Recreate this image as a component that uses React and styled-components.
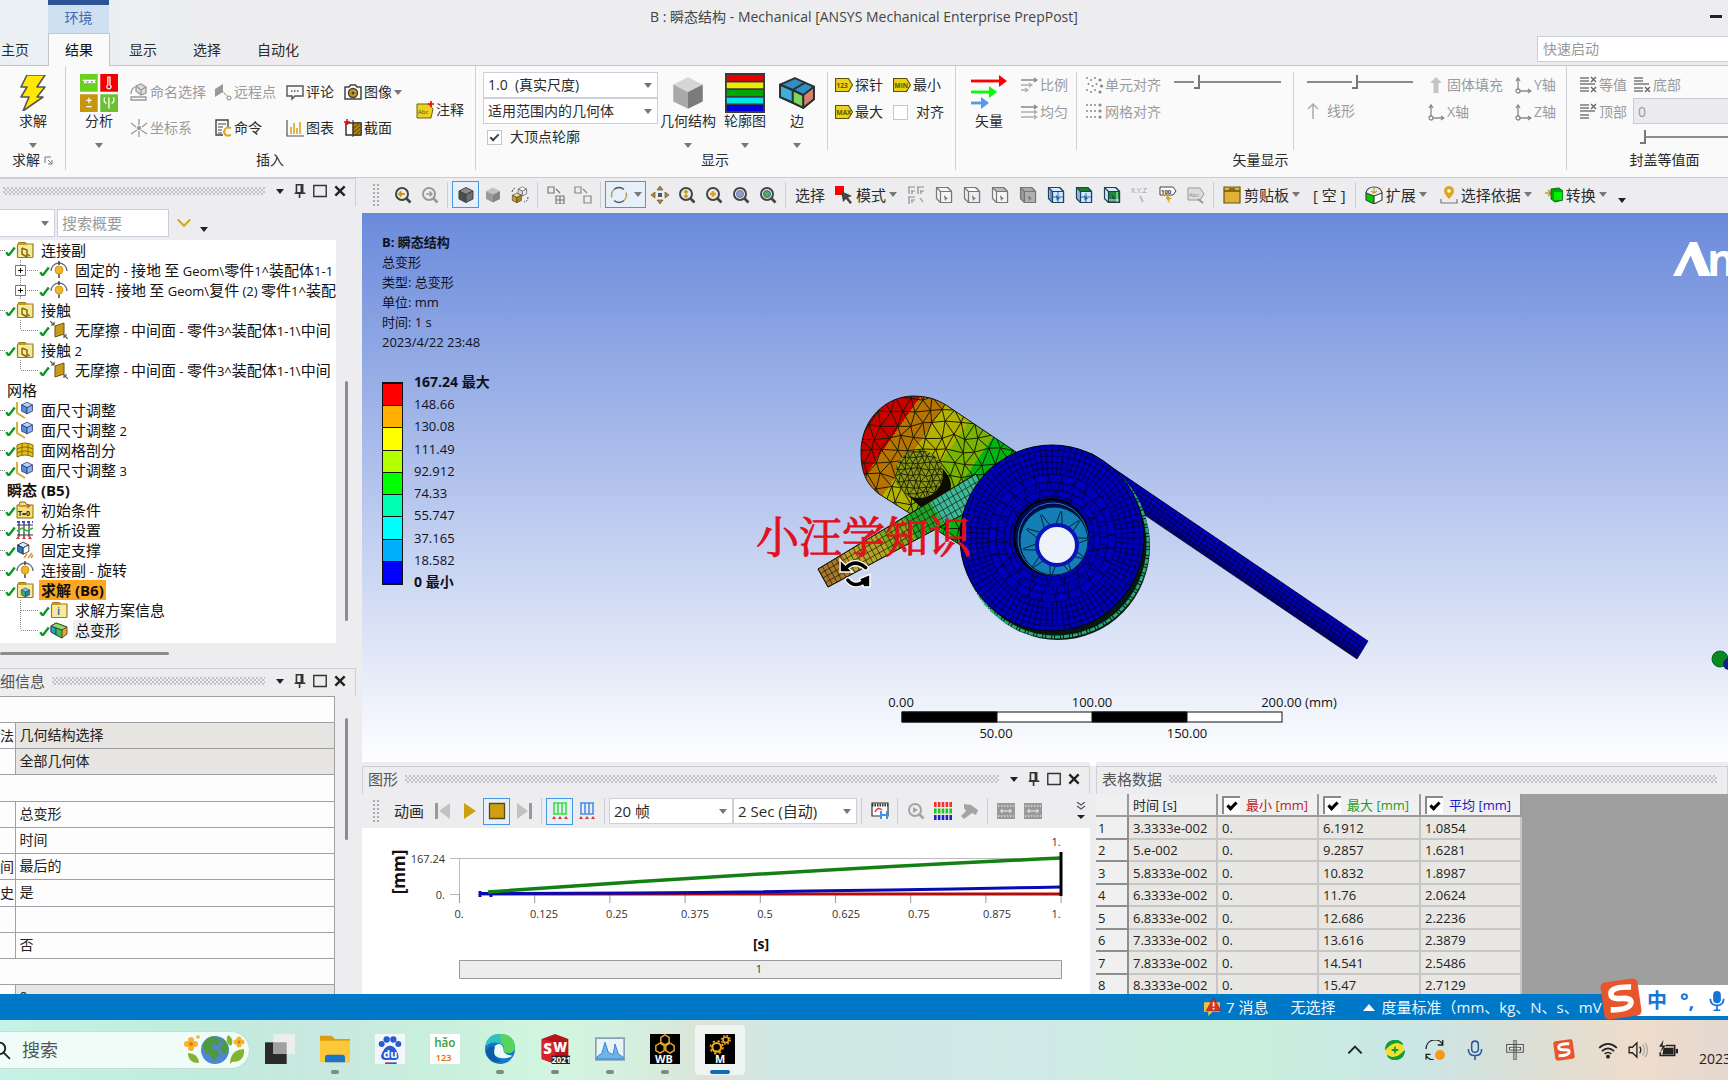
import React from "react";
import styled, { createGlobalStyle, css } from "styled-components";

const ui = `"Open Sans", "Noto Sans CJK SC", sans-serif`;

const Global = createGlobalStyle`
  *, *::before, *::after { box-sizing: border-box; }
  html, body, #root { height: 100%; margin: 0; }
  body { font: 14px/20px ${ui}; color: #2b2b2b; background: #ededef; overflow: hidden; }
  button, input, select { font: inherit; color: inherit; margin: 0; padding: 0; border: 0; background: none; border-radius: 0; outline: 0; }
  button { white-space: nowrap; cursor: pointer; }
  svg { display: block; flex: none; }
`;

/* ---------- icons ---------- */
const K = "#444";
const Y = "#c99a1c";
const cube = (a, b, c, s = K) => (
  <g stroke={s} strokeWidth="1" strokeLinejoin="round">
    <path d="M9 1.5 16 5 9 8.5 2 5Z" fill={a} />
    <path d="M2 5v8l7 3.500v-8Z" fill={b} />
    <path d="M16 5v8l-7 3.500v-8Z" fill={c} />
  </g>
);
const lens = (s, inner) => (
  <g fill="none" stroke={s} strokeWidth="2">
    <circle cx="8" cy="8" r="6" />
    <path d="m12.500 12.500 4 4" strokeWidth="2.600" />
    {inner}
  </g>
);
const box3 = (top, front, side, s = "#777") => (
  <g stroke={s} strokeWidth="1.200" strokeLinejoin="round">
    <path d="M1.500 1.500h11l4 4v11h-11l-4-4Z" fill={side} />
    <path d="M1.500 1.500h11l4 4h-11Z" fill={top} />
    <path d="M5.500 5.500h11v11h-11Z" fill={front} />
    <path d="m9 9 4 4-2 .300-1 2Z" fill={s} stroke="none" />
  </g>
);
const tag = (t) => (
  <g>
    <path d="M.500 2.500h13l4 6.500-4 6.500H.500Z" fill="#ecd21a" stroke="#5a5200" strokeWidth="1.200" />
    <text x="1.500" y="11.500" fontSize="6.500" fontWeight="700" fill="#5a5200">{t}</text>
  </g>
);
const arrows = (ends) => ends.map((e, i) => (
  <path key={i} d={`M1 ${4 + i * 5}h${e}m-3-2 3 2-3 2`} stroke={i ? "#b0b0b0" : "#888"} strokeWidth="1.300" fill="none" />
));
const axis = (
  <g stroke="#8a8a8a" strokeWidth="1.300" fill="none">
    <path d="M4 13V2M2 5l2-3 2 3M6 15h11M14 13l3 2-3 2" /><circle cx="4" cy="15" r="2" />
  </g>
);
const dotGrid = (skew) => (
  <g fill="#8a8a8a">
    {[2, 6, 10, 15].flatMap((x, i) => [2, 8, 14].map((y, j) => (
      <circle key={x + "-" + y} cx={x + (skew && j === 1 ? 1.5 : 0)} cy={y + (skew && i % 2 ? 2 : 0)} r={i === 3 ? 1.6 : 1} />
    )))}
  </g>
);
const iso = (top, bottom) => (
  <g>
    <path d="M1 2h9M1 5h9M1 8h15M1 12h9M1 15h9" stroke="#999" strokeWidth="2.200" />
    {top && <path d="m12 1 5 5m0-5-5 5" stroke="#666" strokeWidth="1.400" />}
    {bottom && <path d="m12 11 5 5m0-5-5 5" stroke="#666" strokeWidth="1.400" />}
  </g>
);
const folder = (inner) => (
  <g>
    <path d="M1.500 4 3 1.500h6L10.500 3H17v12.500q0 1-1 1H2.500q-1 0-1-1Z" fill="#f6eb9a" stroke="#9a7a1a" strokeWidth="1.200" />
    <path d="M2 4 3.300 2H9l1.500 2Z" fill="#c99a1c" />
    {inner}
  </g>
);
const bars = (c) => (
  <g>
    <path d="M2 1h14M2 12h14M3 1v11M7 1v11M11 1v11M15 1v11" stroke={c} strokeWidth="1.600" />
    <path d="m1 17 2-3 2 3Zm6 0 2-3 2 3Zm6 0 2-3 2 3Z" fill="#d33" />
  </g>
);

const icons = {
  bolt: <path d="M6 0h9l-4 6h4l-4 5h3L4 18l3-7H3l3-5H3Z" fill="#ffe900" stroke="#555" strokeWidth=".8" strokeLinejoin="round" />,
  analysis: (
    <g>
      <path d="M0 0h8.400v8.400H0Z" fill="#6cd022" /><path d="M9.600 0H18v8.400H9.600Z" fill="#f20000" />
      <path d="M0 9.600h8.400V18H0Z" fill="#c8960c" /><path d="M9.600 9.600H18V18H9.600Z" fill="#6cc032" />
      <path d="M1.300 3h6M2 4.300l.6-1 .6 1M4 4.300l.6-1 .6 1M6 4.300l.6-1 .6 1M13.200 1.500h1v3.700a1 1 0 1 1-1 0ZM3 12.500h2.500M4.250 11.300v2.500M3 15.500h2.500M13.700 11v5.500M11.500 11v2l1 1M16 11v2l-1 1" fill="none" stroke="#fff" strokeWidth=".6" />
    </g>
  ),
  named: <g fill="none" stroke="#999" strokeWidth="1.300"><path d="M1 14h15v3H1Z" /><path d="m6 3 5-2 5 3v6l-5 2-5-4Z" fill="#ddd" /><path d="m6 3 5 4 5-3M11 7v5" /><path d="M1 11q0-5 4-7" /></g>,
  remote: <g><path d="m1 6 8-5v8l-8 5Z" fill="#999" /><path d="m8 8 5 5" stroke="#999" strokeWidth="1.300" strokeDasharray="2 1" /><circle cx="15" cy="15" r="2" fill="none" stroke="#888" /></g>,
  comment: <g fill="none" stroke="#555" strokeWidth="1.400"><path d="M1 3h16v10H9l-3 3v-3H1Z" /><path d="M5 8h8" strokeDasharray="1.500 1.500" /></g>,
  camera: <g><path d="M1 4h4l1.500-2h5L13 4h4v12H1Z" fill="#fff" stroke="#444" strokeWidth="1.500" /><circle cx="9" cy="10" r="4.500" fill="#c99a1c" stroke="#444" strokeWidth="1.500" /><circle cx="9" cy="10" r="1.500" fill="#444" /></g>,
  note: <g><path d="M1 3h12l4 5-2 9H1Z" fill="#ecd21a" stroke="#6b6400" /><text x="2" y="13" fontSize="6" fill="#444">Abc</text><path d="M15 0v6M12 3h6" stroke="#e00" strokeWidth="1.600" /></g>,
  coord: <g stroke="#999" strokeWidth="1.300"><path d="M9 0v6M9 12v6M1 15l6-4M17 15l-6-4M1 4l5 4M17 4l-5 4" /><circle cx="9" cy="9" r="1.500" fill="#999" /></g>,
  command: <g fill="none"><path d="M14 8V1H2v15h7" stroke="#444" strokeWidth="1.400" /><path d="M4 5h8M4 8h5M4 11h4M4 14h4" stroke="#444" /><path d="M17 9q-6-2-7 4 1 5 7 3" stroke="#dfa61a" strokeWidth="2" /></g>,
  chart: <g fill="none"><path d="M1 1v16h17" stroke="#555" strokeWidth="1.200" /><path d="M5 15V8M8 15V4M11 15V9M14 15V3" stroke="#dba520" strokeWidth="1.600" /></g>,
  section: <g><path d="M2 4h15v12H2Z" fill="#fff" stroke="#333" strokeWidth="1.500" /><path d="M9 4h8v12H9Z" fill="#b5820f" stroke="#333" /><path d="m10 9 5-4M10 13l6-5M11 16l5-4" stroke="#5b4208" /><path d="M9 1v17" stroke="#333" /><path d="M0 3h6M3 0v6" stroke="#e00" strokeWidth="1.500" /></g>,
  geo: cube("#d6d6d6", "#a9a9a9", "#7b7b7b", "none"),
  contour: <g><path d="M0 0h18v18H0Z" fill="#3a3a3a" />{["#e80000", "#ecec00", "#00a600", "#00e5e5", "#0000e0"].map((c, i) => <path key={c} d={`M.8 ${0.9 + i * 3.4}h16.400v2.600H.8Z`} fill={c} />)}</g>,
  edge: <g stroke="#2a3030" strokeWidth=".9" strokeLinejoin="round"><path d="m1 5 7-3 9 4v6l-5 4L1 11Z" fill="#2f8fc4" /><path d="m1 5 6 2.500v6L1 11Z" fill="#3faedb" /><path d="m7 7.500 5 2.500v6l-5-2.500Z" fill="#7fd65c" /><path d="m12 10 5-4v6l-5 4Z" fill="#d9806f" /><path d="m7 7.500 6-3.500M1 5l11 5" /></g>,
  probe: tag("123"), min: tag("MIN"), max: tag("MAX"),
  vector: <g fill="none" strokeWidth="1.400"><path d="M0 3h14" stroke="#f00" /><path d="m14 0 4 3-4 3Z" fill="#f00" /><path d="M0 8.500h10" stroke="#0f0" /><path d="m9 5.500 4 3-4 3Z" fill="#0f0" /><path d="M0 14h6" stroke="#5a96e8" /><path d="m5 11 4 3-4 3Z" fill="#5a96e8" /></g>,
  prop: <g>{arrows([16, 11, 7])}</g>, even: <g>{arrows([16, 16, 16])}</g>,
  dotsA: dotGrid(true), dotsB: dotGrid(false), axis,
  up: <path d="M6 17V2M1 7l5-5 5 5" fill="none" stroke="#aaa" strokeWidth="1.500" />,
  upfat: <path d="m9 1 6 6h-3.500v10h-5V7H3Z" fill="#c4c4c4" />,
  isoBoth: iso(true, true), isoTop: iso(true, false), isoBot: iso(false, true),
  pin: <path d="M5 2h7v9H5ZM3 11.500h12M8.500 12v5M10.500 2v9" fill="none" stroke="#333" strokeWidth="1.800" />,
  square: <path d="M1 2h16v14H1Z" fill="none" stroke="#333" strokeWidth="1.800" />,
  close: <path d="m3 3 12 12M15 3 3 15" stroke="#222" strokeWidth="3" />,
  zprev: lens(K, <path d="M11 8H5m2.500-2.500L5 8l2.500 2.500" stroke={Y} />),
  znext: lens("#999", <path d="M5 8h6M8.500 5.500 11 8l-2.500 2.500" strokeWidth="1.500" />),
  cubeDark: cube("#8c8c8c", "#4c4c4c", "#6e6e6e"),
  cubeSoft: cube("#c2c2c2", "#999", "#858585", "none"),
  cubeSwap: <g><g transform="translate(6 0) scale(.6)">{cube("#fff", "#ddd", "#eee")}</g><g transform="translate(0 6) scale(.65)">{cube("#f2dc7c", "#c99a1c", "#b5820f")}</g><path d="M1 6q1-4 4-4M17 11q0 4-4 5" fill="none" stroke={K} strokeDasharray="2 1" /></g>,
  expandA: <g fill="none" stroke="#777" strokeWidth="1.200"><path d="M1 1h6v6H1ZM9 10h8v8H9ZM13 10v8M9 14h8M9 3l4 4" /></g>,
  expandB: <g fill="none" stroke="#888" strokeWidth="1.200"><path d="M1 1h6v6H1ZM10 10h7v7h-7ZM9 3l4 4" /></g>,
  rotate: <g fill="none" strokeWidth="1.500"><path d="M4 3.500a7.500 7.500 0 0 1 10 0M4 14.500a7.500 7.500 0 0 0 10 0" stroke="#555" /><path d="M4 3.500a7.500 7.500 0 0 0-2 8M14 14.500a7.500 7.500 0 0 0 2-8" stroke="#b9a45a" /></g>,
  pan: <g fill="#c08a10"><path d="m9 0 3 4H6Zm0 18 3-4H6ZM0 9l4-3v6Zm18 0-4-3v6Z" stroke="#444" strokeWidth=".6" /><path d="M7 7h4v4H7Z" fill="#555" /></g>,
  zud: lens(K, <path d="M8 4.500v7M6 6.500l2-2 2 2M6 9.500l2 2 2-2" stroke={Y} strokeWidth="1.500" />),
  zin: lens(K, <path d="M8 5v6M5 8h6" stroke="#dba520" strokeWidth="2.500" />),
  zfit: lens(K, <circle cx="8" cy="8" r="3.500" fill="#8aa0c8" stroke="#6a7da8" strokeWidth="1" />),
  zsel: lens(K, <circle cx="8" cy="8" r="3.500" fill="#4fb04f" stroke="#3366aa" strokeWidth="1" />),
  mode: <g><path d="M0 0h9v9H0Z" fill="#f00" /><path d="m6 5 11 5-4 1.500 4 5-2 1.500-4-5-3 3Z" fill="#444" /></g>,
  label: <path d="M1 1h7M2 1v7M4 5h4M5 5v3M10 1h7M11 1v7M13 5h4M14 5v3M1 11h7M2 11v7M4 14h4M5 14v3M13 12l3 4" fill="none" stroke="#8d8d8d" strokeWidth="1.200" />,
  b1: box3("#f5f5f7", "#f5f5f7", "#f5f5f7"), b2: box3("#fafafa", "#ededef", "#ededef"), b3: box3("#bbb", "#f4f4f6", "#f4f4f6"), b4: box3("#aaa", "#b0b0b0", "#999"),
  b5: <g>{box3("#d8eaff", "#cfe6ff", "#9cb8d8", "#20405c")}<path d="M6 11h10M11 6v10M4 4v10" stroke="#2b6fb4" /></g>,
  b6: <g>{box3("#1a7f2a", "#cfe6ff", "#9cb8d8", "#20405c")}<path d="M6 11h10M11 7v9" stroke="#2b6fb4" /></g>,
  b7: <g>{box3("#d8eaff", "#1f8a2f", "#cfe6ff", "#204050")}<path d="M6 14h10M14 6v10" stroke="#cfe6ff" /></g>,
  xyz: <g><text x="0" y="7" fontSize="7" fill="#999">X.Y.Z</text><path d="m9 10 3 6" stroke="#bbb" strokeWidth="2" /></g>,
  n100: <g><path d="M1 1h13l3 4-3 4H1Z" fill="#fff" stroke="#444" /><text x="2" y="8" fontSize="6" fontWeight="700" fill="#333">100</text><path d="m8 9 5 4-3 .500 1 4-4-5Z" fill="#dba520" /></g>,
  abc: <g><path d="M1 2h12l4 6-4 6H1Z" fill="#ddd" stroke="#999" /><text x="2" y="11" fontSize="6" fill="#888">Abc</text><path d="m11 13 5 4" stroke="#999" strokeWidth="2" /></g>,
  clip: <g><path d="M1 1h16v16H1Z" fill="#e0b23a" stroke="#6b5312" strokeWidth="1.200" /><path d="M1 5h16M6 3h6" stroke="#6b5312" strokeWidth="1.500" /></g>,
  extend: <g fill="none" stroke="#444" strokeWidth="1.200"><path d="m1 7 8 3v8l-8-4Z" fill="#0c0" /><path d="m9 10 8-3v7l-8 4Z" fill="#fff" /><path d="M1 7q1-6 8-6t8 6" /><path d="M9 2v5M6 5l3 2 3-2" stroke="#c99a1c" /></g>,
  map: <g><path d="M9 13Q4 8 4 5a5 5 0 0 1 10 0q0 3-5 8Z" fill="#dba520" /><circle cx="9" cy="5" r="1.800" fill="#fff" /><path d="M1 13v4h16v-4" fill="none" stroke="#777" strokeWidth="1.200" /></g>,
  convert: <g><path d="M0 7h5M3 4l3 3-3 3" fill="none" stroke="#c99a1c" strokeWidth="1.500" /><path d="m6 3 8-1 4 3v9l-8 2-4-3Z" fill="#0a0" stroke="#163" /><path d="M9 6h8v8H9Z" fill="#0e0" /></g>,
  chevY: <path d="m2 5 7 7 7-7" fill="none" stroke="#dba520" strokeWidth="2.500" />,
  check: <path d="m2 12 4 5L16 4" fill="none" stroke="#0b9a24" strokeWidth="4" />,
  fJoint: folder(<path d="m6 7 5 2v7M6 7v6l5 3M11 13l3 2" fill="none" stroke="#8b6914" strokeWidth="1.500" />),
  fSol: folder(<g transform="translate(4 6) scale(.6)">{cube("#6bc3ef", "#3fae5c", "#2a7fc0", "#345")}</g>),
  fInfo: folder(<text x="7" y="14" fontSize="10" fontWeight="700" fill="#3b6fd0">i</text>),
  joint: (
    <g fill="none" stroke="#667">
      <path d="M1 10a8 8 0 0 1 16 0" strokeWidth="1.300" />
      <path d="M9 0v4M9 12v5" stroke="#444" strokeWidth="1.500" />
      <circle cx="9" cy="9" r="4" fill="#edb72a" stroke="#d29a10" />
    </g>
  ),
  contact: <g><path d="m5 5 9-3v11l-9 3Z" fill="#c99a1c" stroke="#6b5312" /><path d="m0 0 4 4M4 1v3H1M18 18l-4-4M14 17v-3h3" stroke="#555" strokeWidth="1.200" fill="none" /></g>,
  sizing: <g><path d="M1 1v11l8 5" fill="none" stroke="#d5a92b" strokeWidth="1.800" /><g transform="translate(4 0) scale(.78)">{cube("#b7d2ff", "#5d8de0", "#86b0f5", "#2a3d66")}</g></g>,
  mesh: <g><path d="M1 4q8-4 16 0v12q-8-4-16 0Z" fill="#e4c11c" stroke="#8a6d00" /><path d="M1 8q8-4 16 0M1 12q8-4 16 0M6 3v11M12 3v11" fill="none" stroke="#8a6d00" /></g>,
  t0: <g><path d="M1 4h2l1-3h5l2 3h6v13H1Z" fill="#f0e27a" stroke="#8a6d00" /><path d="M3 5h11m-3-2 3 2-3 2" stroke="#c33" fill="none" /><text x="2" y="15" fontSize="7" fontWeight="700" fill="#222">T=0</text></g>,
  settings: <g><path d="M3 1v15M8 1v15M13 1v15M1 4h16M1 14h16" stroke="#334" strokeWidth="1.200" /><path d="m1 10 5-3 5 3 6-3" fill="none" stroke="#2b2" strokeWidth="1.500" /><path d="M1 1h16" stroke="#44d" strokeWidth="2" strokeDasharray="3 2" /><path d="m0 18 2-3 2 3Zm6 0 2-3 2 3Zm6 0 2-3 2 3Z" fill="#d33" /></g>,
  support: <g><g transform="scale(.8)">{cube("#d9ecff", "#1f7fd0", "#fff", "#223")}</g><path d="m8 17 3-4M12 17l4-5M15 17l2-3" stroke="#e0902a" strokeWidth="1.400" /></g>,
  deform: <g stroke="#2a3a2a" strokeWidth=".8"><path d="m1 5 5-3 11 4v7l-5 4-11-6Z" fill="#f0a030" /><path d="m1 5 5 2v7l-5-3Z" fill="#2a9fd8" /><path d="m6 7 6 2v8l-6-3Z" fill="#35c060" /><path d="m1 5 5-3 11 4-5 3Z" fill="#8fd86a" /></g>,
  first: <g fill="#c2c2c2"><path d="M1 1h3v16H1Z" fill="#999" /><path d="M16 1v16L5 9Z" /></g>,
  play: <path d="m3 1 12 8L3 17Z" fill="#cf9f12" />,
  stop: <path d="M1.500 1.500h15v15h-15Z" fill="#cf9f12" stroke="#5a4a1a" strokeWidth="1.300" />,
  next: <g fill="#c2c2c2"><path d="M14 1h3v16h-3Z" fill="#999" /><path d="M2 1v16l11-8Z" /></g>,
  barsG: bars("#3be03b"), barsB: bars("#4a8ee8"),
  export: <g><path d="M1 1h16v13H1Z" fill="#fff" stroke="#333" strokeWidth="1.200" /><path d="M1 3h16" stroke="#333" strokeWidth="3" strokeDasharray="1.500 1" /><path d="M4 10q3-6 7-2" fill="none" stroke="#e33" strokeWidth="1.500" /><path d="M9 9h8v8H9Z" fill="#4a90e8" /><path d="M11 9h4v3h-4ZM11 14h4v3h-4Z" fill="#fff" /></g>,
  zplay: lens("#a4a4a4", <path d="M6 5v6l5-3Z" fill="#a4a4a4" stroke="none" />),
  stripes: <g strokeWidth="5" strokeDasharray="2.600 1.250"><path d="M0 2.500h18" stroke="#e33" /><path d="M0 9h18" stroke="#1ec81e" /><path d="M0 15.500h18" stroke="#22c" /></g>,
  hand: <path d="m3 2 7 1 7 5-2 5-4-2-8 6-3-3 5-5-2-3Z" fill="#a4a4a4" />,
  film: <g><path d="M0 1h18v16H0Z" fill="#999" /><path d="M1 4h16M1 14h16" stroke="#ddd" strokeWidth="1.500" strokeDasharray="1.500 1.500" /><path d="M3 9h12M5 7v4M13 7v4" stroke="#eee" /></g>,
  more: <g fill="none" stroke="#555" strokeWidth="1.200"><path d="m5 0 4 3 4-3M5 4l4 3 4-3" /><path d="m5 13 4 4 4-4Z" fill="#222" stroke="none" /></g>,
  cursor: (
    <g fill="none" strokeLinecap="round">
      <path d="M4 6q5-5 11 0M5 13q4 5 10 0" stroke="#fff" strokeWidth="3.400" />
      <path d="M.600 1.400v7h7ZM17.400 16.800v-7l-6 2.500 2.500 4.500Z" fill="#000" stroke="#fff" strokeWidth=".8" />
      <path d="M4 6q5-5 11 0M5 13q4 5 10 0" stroke="#000" strokeWidth="2" />
    </g>
  ),
  /* status and tray */
  warn: <g><path d="M1 4h15v9H9l-4 4v-4H1Z" fill="#f5c33b" /><path d="m10 0 7 12H3Z" fill="#e03020" stroke="#8e1a10" strokeWidth=".6" /><path d="M10 4v4M10 9.500v1.500" stroke="#fff" strokeWidth="1.600" /></g>,
  mag: <g fill="none" stroke="#222" strokeWidth="1.800"><circle cx="7" cy="7" r="5.500" /><path d="m11 11 6 6" /></g>,
  view: <g><path d="M0 5h13v13H0Z" fill="#2a2a2a" /><path d="M5 0h13v12H5Z" fill="#eee" opacity=".9" /><path d="M5 5h8v7H5Z" fill="#a0a0a0" /></g>,
  explorer: <g><path d="M0 1h7l2 2h9v5H0Z" fill="#dd9c12" /><path d="M0 4h18v13H0Z" fill="#fbc83a" /><path d="M3 17v-3q0-1.500 1.500-1.500h9q1.500 0 1.500 1.500v3Z" fill="#1c74c8" /></g>,
  baidu: <g fill="#2a5bd0"><path d="M0 0h18v18H0Z" fill="#f3f6fb" /><circle cx="4" cy="6" r="1.800" /><circle cx="7" cy="3.300" r="1.900" /><circle cx="11" cy="3.300" r="1.900" /><circle cx="14" cy="6" r="1.800" /><path d="M9 7q2.500 0 4 3t1 4.500Q13 16 9 15.500 5 16 4 14.500t1-4.500q1.500-3 4-3Z" /><text x="5" y="14.500" fontSize="6.500" fontWeight="700" fill="#fff">du</text><path d="M6 17h3v1H6Z" fill="#d22" /><path d="M9 17h4v1H9Z" /></g>,
  hao: <g><path d="M0 0h18v18H0Z" fill="#fff" /><text x="2.500" y="8" fontSize="7" fontWeight="600" fill="#36a032">hǎo</text><text x="3.500" y="16" fontSize="5.500" fontWeight="600" fill="#e06a10">123</text></g>,
  edgeB: <g><circle cx="9" cy="9" r="9" fill="#1577c8" /><path d="M0 8Q1 0 9 0q8 0 9 7.500 0 4-4 4-3 0-3-2 1-3-2.500-4Q3 4 0 8Z" fill="#2fc3c0" /><path d="M9 0q8 0 9 7.500 0 4-4 4-3 0-3-2 1-3-1-4Z" fill="#56d45e" /><path d="M5 10q0-3 3-4 3 0 3 3.500 0 3 5.500 3.500-3 2-6 1.500Q5 14 5 10Z" fill="#e9fbf4" /><path d="M6 8q-2 6 4 8.500Q2 18 .500 11 2 6 6 8Z" fill="#0d5aa8" /></g>,
  sw: <g><path d="m1 3 8-3 8 3v12l-8 3-8-3Z" fill="#b8141c" /><path d="m1 3 8 2v13l-8-3Z" fill="#d8232c" /><text x="2" y="12" fontSize="9" fontWeight="800" fill="#fff">S</text><text x="8" y="11" fontSize="8" fontWeight="800" fill="#fff">W</text><path d="M7 13h11v5H7Z" fill="#222" /><text x="7" y="17.500" fontSize="5" fontWeight="700" fill="#fff">2021</text></g>,
  perf: <g><path d="M.500 2.500h17v13H.500Z" fill="#e9f3fa" stroke="#8aa0b4" /><path d="M1 14q2-2 3-2l2-7 2 6 2 1h1l1-6 2 6 3 2v1H1Z" fill="#6cb4ec" stroke="#3a86cc" strokeWidth=".6" /></g>,
  wb: <g><path d="M0 0h18v18H0Z" fill="#000" /><g fill="none" stroke="#e0a52a" strokeWidth=".9"><path d="m9 .500 2.500 1.500v3L9 6.500 6.500 5V2ZM6 5.500 8.500 7v3L6 11.500 3.500 10V7ZM12 5.500 14.500 7v3L12 11.500 9.500 10V7Z" /></g><text x="3" y="17.500" fontSize="6.500" fontWeight="700" fill="#fff">WB</text></g>,
  mech: <g><path d="M0 0h18v18H0Z" fill="#000" /><circle cx="7" cy="8" r="2.600" fill="none" stroke="#f0a818" strokeWidth="1.300" /><circle cx="7" cy="8" r="3.800" fill="none" stroke="#f0a818" strokeDasharray="1.400 1.600" /><circle cx="12.500" cy="3.500" r="1.700" fill="none" stroke="#f0a818" /><circle cx="12.500" cy="3.500" r="2.600" fill="none" stroke="#f0a818" strokeWidth=".9" strokeDasharray="1 1.050" /><text x="6" y="17.500" fontSize="6.500" fontWeight="700" fill="#fff">M</text></g>,
  caretUp: <path d="m3 12 6-6 6 6" fill="none" stroke="#222" strokeWidth="1.800" />,
  guard: <g><circle cx="9" cy="9" r="8.500" fill="#f3e02a" /><path d="M.500 8A8.500 8.500 0 0 1 16 4Q9-1 .500 8ZM17.500 10A8.500 8.500 0 0 1 2 14q7 5 15.500-4Z" fill="#149a3c" stroke="#149a3c" /><path d="M9 6v6M6 9h6" stroke="#149a3c" strokeWidth="1.600" /></g>,
  sync: <g fill="none" stroke="#222" strokeWidth="1.200"><path d="M1 8a8 8 0 0 1 15-4M16 0v4.500h-4.500M1 14q2 4 7 4M1 17.500V13h4" /><circle cx="13.500" cy="13.500" r="4.500" fill="#f59a12" stroke="none" /></g>,
  mic: <g fill="none" stroke="#2a5a9c" strokeWidth="1.400"><rect x="6" y="1" width="6" height="10" rx="3" /><path d="M3 8q0 6 6 6t6-6M9 14v4" /></g>,
  micFill: <g fill="#1676d8"><rect x="5.500" y="0" width="7" height="11" rx="3.500" /><path d="M3 7q0 6 6 6t6-6M9 13v5M6 17.500h6" fill="none" stroke="#1676d8" strokeWidth="1.600" /></g>,
  zhong: <path d="M1.500 4h15v7h-15ZM4 6.500h10v2.500H4ZM8 0h2v18H8Z" fill="#eee" stroke="#555" strokeWidth="1" />,
  sogou: <g transform="rotate(-8 9 9)"><rect x="1" y="1" width="16" height="16" rx="2" fill="#e8552a" /><path d="M14 4.500Q5 3 5 6.500q0 2 4 2.300 4.500.2 4 2.400-.8 3-9 1.800" fill="none" stroke="#fff" strokeWidth="2.400" /></g>,
  wifi: <g fill="none" stroke="#222" strokeWidth="1.500"><path d="M1 7q8-7 16 0M3.500 10q5.500-5 11 0M6 12.500q3-2.500 6 0" /><circle cx="9" cy="15" r="1" fill="#222" /></g>,
  sound: <g fill="none" stroke="#222" strokeWidth="1.200"><path d="M1 6.500h3l4-4v13l-4-4H1ZM10.500 6q2 3 0 6" /><path d="M13 4q3.500 5 0 10M15.500 2.500q4 6.500 0 13" stroke="#aaa" /></g>,
  battery: <g><path d="M7 5h8v9H2v-3" fill="none" stroke="#222" strokeWidth="1.400" /><path d="M5 7h9v6H4Z" fill="#222" /><path d="M16 8h2v4h-2Z" fill="#222" /><path d="M5 0 1 6h3L2 11l5-6H4Z" fill="#222" /></g>,
};
const Icon = ({ n, s = 18 }) => (
  <svg width={s} height={s} viewBox="0 0 18 18" fontFamily="Open Sans, sans-serif" aria-hidden="true">{icons[n]}</svg>
);

const Caret = styled.i`
  flex: none; width: 0; height: 0;
  border: 4px solid transparent; border-bottom-width: 0;
  border-top: 5px solid ${(p) => p.$c || "#777"};
`;

/* ---------- shell ---------- */
const Shell = styled.div`
  height: 100vh; overflow: hidden;
  display: grid; grid-template-rows: 66px 112px minmax(0, 1fr) 26px 60px; grid-template-columns: minmax(0, 1fr);
`;
const Head = styled.header`
  display: grid; grid-template-rows: 33px 33px; border-bottom: 1px solid #c4c6c9;
  background: linear-gradient(90deg, #eaf0f4, #ededef 12%);
`;
const TitleRow = styled.div`
  display: grid; grid-template-columns: 1fr auto 1fr; align-items: center;
`;
const EnvTab = styled.span`
  width: 61px; height: 33px; margin-left: 48px; line-height: 26px; text-align: center;
  color: #4269b8; background: #cfe0f1; border-top: 5px solid #2d5596;
`;
const Title = styled.h1`margin: 0; font-size: 14px; font-weight: 400; color: #444;`;
const Minimize = styled.button`justify-self: end; margin-right: 6px; width: 12px; height: 3px; background: #222;`;
const TabRow = styled.nav`display: flex; align-items: stretch; gap: 2px;`;
const Tab = styled.button`
  padding: 0 16px; border: 1px solid transparent; border-bottom: 0;
  ${(p) => p.$on && css`background: #fafafb; border-color: #c4c6c9; color: #111;`}
  &:first-child { padding-left: 0; }
`;
const QuickStart = styled.input`
  margin: 3px 0 4px auto; width: 191px; padding: 0 5px; background: #fff; border: 1px solid #c9cdd6; border-right: 0;
  &::placeholder { color: #989898; opacity: 1; }
`;

/* ---------- ribbon ---------- */
const Ribbon = styled.div`display: flex; background: #fafafb; border-bottom: 1px solid #c9cbce; overflow: hidden;`;
const Group = styled.section`
  flex: none; width: ${(p) => p.$w}px; height: 104px; padding-top: 6px; display: grid; grid-template-rows: 78px 20px;
  & + & { box-shadow: inset 1px 0 #cfd0d3; }
`;
const GroupBody = styled.div`display: flex; align-items: flex-start; padding-left: ${(p) => p.$pl || 0}px;`;
const GroupLabel = styled.h2`
  margin: 0; font-size: 14px; font-weight: 400; display: flex; justify-content: center; align-items: center; gap: 4px;
`;
const Big = styled.button`
  width: ${(p) => p.$w || 40}px; flex: none; display: grid; grid-template-rows: 42px 14px 15px 5px;
  justify-items: center; align-items: center; line-height: 14px;
  & > i { grid-row: 4; }
`;
const Col = styled.div`
  display: grid; gap: ${(p) => p.$gap || 0}px; padding: ${(p) => p.$pt || 0}px 0 0 ${(p) => p.$pl || 0}px;
  justify-items: start; align-content: start; flex: none;
  ${(p) => p.$w && css`width: ${p.$w}px;`}
`;
const Small = styled.button`
  display: flex; align-items: center; gap: 2px; height: 20px; color: ${(p) => (p.$off ? "#9b9b9b" : "inherit")};
`;
const Rule = styled.div`width: 1px; height: 78px; margin-left: ${(p) => p.$ml || 0}px; background: #cfd0d3; flex: none;`;
const SelectWrap = styled.span`
  display: grid; align-items: center; flex: none; width: ${(p) => p.$w}px; height: 26px; background: #fff; border: 1px solid #ccd0da;
  & > * { grid-area: 1 / 1; }
  & > i { justify-self: end; margin-right: 5px; pointer-events: none; }
`;
const Select = styled.select`appearance: none; width: 100%; height: 24px; padding-left: 4px;`;
const Tick = styled.label`
  display: flex; align-items: center; gap: 8px; height: ${(p) => p.$h || 20}px; padding-left: ${(p) => p.$pl || 0}px;
  input { appearance: none; width: 15px; height: 15px; background: #fff; border: 1px solid #c3c6d2; display: grid; place-items: center; }
  input:checked::after { content: ""; width: 9px; height: 5px; border: solid #444; border-width: 0 0 2px 2px; rotate: -45deg; translate: 0 -1px; }
`;
const Range = styled.input.attrs({ type: "range" })`
  appearance: none; width: ${(p) => p.$w}px; height: 20px; margin-left: ${(p) => p.$ml || 0}px; display: block;
  background: linear-gradient(#8b8b8b, #8b8b8b) center / 100% 2px no-repeat;
  &::-webkit-slider-thumb { appearance: none; width: 6px; height: 14px; background: #fafafb; border: solid #777; border-width: 0 2px 2px 0; }
`;
const NumberBox = styled.input`width: 130px; height: 26px; padding-left: 4px; background: #ebebef; border: 1px solid #c9ccd8; color: #999;`;

const SB = ({ i, children, off, caret }) => (
  <Small $off={off}><Icon n={i} />{children}{caret && <Caret />}</Small>
);
const BigButton = ({ i, s, w, children, caret }) => (
  <Big $w={w}><Icon n={i} s={s} /><span>{children}</span>{caret && <Caret />}</Big>
);
const Combo = ({ w, label, children }) => (
  <SelectWrap $w={w}><Select aria-label={label}><option>{children}</option></Select><Caret /></SelectWrap>
);

const RibbonBar = () => (
  <Ribbon>
    <Group $w={65}>
      <GroupBody $pl={13}><BigButton i="bolt" s={36} caret>求解</BigButton></GroupBody>
      <GroupLabel>求解<svg width="9" height="9" viewBox="0 0 9 9"><path d="M1 7V1h6M4 4l4 4M8 4v4H4" fill="none" stroke="#777" /></svg></GroupLabel>
    </Group>
    <Group $w={410}>
      <GroupBody $pl={14}>
        <BigButton i="analysis" s={38} caret>分析</BigButton>
        <Col $pt={10} $gap={16} $pl={11} $w={95}><SB i="named" off>命名选择</SB><SB i="coord" off>坐标系</SB></Col>
        <Col $pt={10} $gap={16} $w={72}><SB i="remote" off>远程点</SB><SB i="command">命令</SB></Col>
        <Col $pt={10} $gap={16} $w={58}><SB i="comment">评论</SB><SB i="chart">图表</SB></Col>
        <Col $pt={10} $gap={16} $w={72}><SB i="camera" caret>图像</SB><SB i="section">截面</SB></Col>
        <Col $pt={28}><SB i="note">注释</SB></Col>
      </GroupBody>
      <GroupLabel>插入</GroupLabel>
    </Group>
    <Group $w={480}>
      <GroupBody $pl={8}>
        <Col $w={175}>
          <Combo w={175} label="比例">1.0&nbsp; (真实尺度)</Combo>
          <Combo w={175} label="范围">适用范围内的几何体</Combo>
          <Tick $h={26} $pl={4}><input type="checkbox" defaultChecked />大顶点轮廓</Tick>
        </Col>
        <BigButton i="geo" s={38} w={60} caret>几何结构</BigButton>
        <BigButton i="contour" s={40} w={54} caret>轮廓图</BigButton>
        <BigButton i="edge" s={38} w={50} caret>边</BigButton>
        <Rule $ml={5} />
        <Col $pt={3} $gap={7} $pl={7} $w={65}><SB i="probe">探针</SB><SB i="max">最大</SB></Col>
        <Col $pt={3} $gap={7}><SB i="min">最小</SB><Tick><input type="checkbox" />对齐</Tick></Col>
      </GroupBody>
      <GroupLabel>显示</GroupLabel>
    </Group>
    <Group $w={611}>
      <GroupBody $pl={14}>
        <BigButton i="vector" s={36}>矢量</BigButton>
        <Col $pt={3} $gap={7} $pl={11} $w={67}><SB i="prop" off>比例</SB><SB i="even" off>均匀</SB></Col>
        <Rule />
        <Col $pt={3} $gap={7} $pl={8} $w={97}><SB i="dotsA" off>单元对齐</SB><SB i="dotsB" off>网格对齐</SB></Col>
        <Col $w={119}><Range $w={107} defaultValue={20} aria-label="单元对齐" /></Col>
        <Rule />
        <Col $gap={9} $pl={13} $w={133}><Range $w={106} defaultValue={45} aria-label="线形" /><SB i="up" off>线形</SB></Col>
        <Col $pt={3} $gap={7} $w={87}><SB i="upfat" off>固体填充</SB><SB i="axis" off>X轴</SB></Col>
        <Col $pt={3} $gap={7}><SB i="axis" off>Y轴</SB><SB i="axis" off>Z轴</SB></Col>
      </GroupBody>
      <GroupLabel>矢量显示</GroupLabel>
    </Group>
    <Group $w={196}>
      <GroupBody $pl={13}>
        <Col $pt={3} $gap={7} $w={54}><SB i="isoBoth" off>等值</SB><SB i="isoTop" off>顶部</SB></Col>
        <Col $pt={3} $gap={3}>
          <SB i="isoBot" off>底部</SB>
          <NumberBox defaultValue="0" aria-label="顶部" />
          <Range $w={120} $ml={7} defaultValue={0} aria-label="封盖等值面" />
        </Col>
      </GroupBody>
      <GroupLabel>封盖等值面</GroupLabel>
    </Group>
  </Ribbon>
);

/* ---------- docks ---------- */
const Body = styled.main`display: grid; grid-template-columns: 362px minmax(0, 1fr); min-height: 0;`;
const DockHead = styled.div`
  display: flex; align-items: center; height: 28px; padding: 0 7px 3px ${(p) => p.$pl || 0}px; gap: 4px;
  border: 1px solid #cdd0d6; border-width: 1px 1px 0 ${(p) => (p.$pl ? 1 : 0)}px; font-size: 15px; color: #555; overflow: hidden;
`;
const Dots = styled.span`
  flex: 1; height: 8px; margin: 0 3px;
  background: radial-gradient(circle at 1px 1px, #c2c4c8 1px, transparent 1px) 0 0 / 4px 4px,
    radial-gradient(circle at 1px 1px, #c2c4c8 1px, transparent 1px) 2px 2px / 4px 4px;
`;
const DockBtn = styled.button`width: 16px; height: 20px; display: grid; place-items: center;`;
const DockHeader = ({ title, pl, buttons = true }) => (
  <DockHead $pl={pl}>
    {title}<Dots />
    {buttons && <>
      <DockBtn aria-label="菜单"><Caret $c="#222" /></DockBtn>
      <DockBtn aria-label="固定"><Icon n="pin" s={16} /></DockBtn>
      <DockBtn aria-label="最大化"><Icon n="square" s={14} /></DockBtn>
      <DockBtn aria-label="关闭"><Icon n="close" s={14} /></DockBtn>
    </>}
  </DockHead>
);
const Left = styled.aside`
  display: grid; grid-template-rows: 28px 34px 403px 25px 28px minmax(0, 1fr); padding-right: 6px; min-height: 0;
`;
const SearchRow = styled.div`display: flex; align-items: center; padding: 0 0 3px; gap: 2px; margin-top: 3px;`;
const SearchInput = styled.input`
  width: 112px; height: 28px; padding-left: 4px; margin-right: 5px; font-size: 15px; background: #fff; border: 1px solid #c9cdd8;
  &::placeholder { color: #9a9a9a; opacity: 1; }
`;
const FilterCombo = styled(SelectWrap)`height: 28px; border-left: 0;`;
const Overflow = styled(Caret)`margin: 12px 0 0 6px;`;
const Scroller = styled.div`display: flex; min-height: 0; padding-right: 8px;`;
const Tree = styled.ul`
  list-style: none; margin: 0; padding: 0; width: 336px; background: #fff; overflow: hidden; font-size: 15px; color: #111;
`;
const TreeRow = styled.li`
  height: 20px; display: flex; align-items: center; white-space: nowrap; padding-left: ${(p) => [7, 0, 15][p.$lv]}px;
  font-weight: ${(p) => (p.$bold ? 700 : 400)};
`;
const NodeLabel = styled.span`
  height: 20px; line-height: 20px; padding: 0 2px; margin-left: ${(p) => (p.$lv ? 5 : -2)}px;
  background: ${(p) => ({ sel: "#ffa51f", soft: "#efefef" })[p.$bg] || "none"};
`;
const Latin = styled.span`font-size: 13px;`;
const Thumb = styled.div`width: 3px; height: ${(p) => p.$h}px; margin: ${(p) => p.$top}px 0 0 auto; background: #8c8c8c; border-radius: 2px;`;
const HThumb = styled.div`width: 169px; height: 3px; margin-top: 9px; background: #8c8c8c; border-radius: 2px;`;

const mixed = (t) => t.split(/([\x20-\x7e]+)/).map((s, i) => (i % 2 ? <Latin key={i}>{s}</Latin> : s));
const Branch = ({ kind }) => (
  <svg width="24" height="20" viewBox="0 0 24 20" fill="none" stroke="#888">
    <path d={`M5.500 0V${kind === "end" ? 10 : 20}M6 10.500h18`} strokeDasharray="1 1" />
    {kind === "plus" && <path d="M.500 5.500h10v10H.500Z" fill="#fff" stroke="#777" />}
    {kind === "plus" && <path d="M3 10.500h5M5.500 8v5" stroke="#111" />}
  </svg>
);
const Stub = () => <svg width="5" height="20" viewBox="0 0 5 20"><path d="M0 10.500h5" stroke="#888" strokeDasharray="1 1" /></svg>;
const nodes = [
  [1, "fJoint", "连接副"], [2, "joint", "固定的 - 接地 至 Geom\\零件1^装配体1-1", "plus"], [2, "joint", "回转 - 接地 至 Geom\\复件 (2) 零件1^装配", "plus"],
  [1, "fJoint", "接触"], [2, "contact", "无摩擦 - 中间面 - 零件3^装配体1-1\\中间", "end"],
  [1, "fJoint", "接触 2"], [2, "contact", "无摩擦 - 中间面 - 零件3^装配体1-1\\中间", "end"],
  [0, null, "网格"], [1, "sizing", "面尺寸调整"], [1, "sizing", "面尺寸调整 2"], [1, "mesh", "面网格剖分"], [1, "sizing", "面尺寸调整 3"],
  [0, null, "瞬态 (B5)", "bold"], [1, "t0", "初始条件"], [1, "settings", "分析设置"], [1, "support", "固定支撑"], [1, "joint", "连接副 - 旋转"],
  [1, "fSol", "求解 (B6)", "bold", "sel"], [2, "fInfo", "求解方案信息", "mid"], [2, "deform", "总变形", "end", "soft"],
];

const Details = styled.table`
  width: 335px; height: 289px; border-collapse: collapse; table-layout: fixed; background: #fdfdfd; font-size: 14px; line-height: 20px; color: #222;
  td { border: 1px solid #a0a0a4; height: 26px; padding: 0 4px 2px; overflow: hidden; white-space: nowrap; }
  tr:nth-child(4n) td { height: 27px; }
  td:first-child { border-left: 0; padding: 0; }
  td.ro { background: #e6e5e2; }
`;
const DetailsBox = styled.div`width: 335px; overflow: hidden; min-height: 0;`;
const details = [null, ["法", "几何结构选择", 1], ["", "全部几何体", 1], null, ["", "总变形"], ["", "时间"], ["间", "最后的"], ["史", "是"], ["", ""], ["", "否"], null, ["", "0. mm", 1]];

const LeftPanel = () => (
  <Left>
    <DockHeader />
    <SearchRow>
      <FilterCombo $w={55}><Select aria-label="筛选"><option> </option></Select><Caret /></FilterCombo>
      <SearchInput placeholder="搜索概要" aria-label="搜索概要" />
      <Icon n="chevY" s={16} /><Overflow $c="#222" />
    </SearchRow>
    <Scroller>
      <Tree>
        {nodes.map(([lv, icon, text, kind, bg], i) => (
          <TreeRow key={i} $lv={lv} $bold={kind === "bold"}>
            {lv === 1 && <Stub />}
            {lv === 2 && <Branch kind={kind} />}
            {lv > 0 && <><Icon n="check" s={11} /><Icon n={icon} /></>}
            <NodeLabel $lv={lv} $bg={bg}>{kind === "bold" ? text : mixed(text)}</NodeLabel>
          </TreeRow>
        ))}
      </Tree>
      <Thumb $top={141} $h={240} />
    </Scroller>
    <HThumb />
    <DockHeader title="细信息" />
    <Scroller>
      <DetailsBox>
        <Details>
          <colgroup><col width="15" /><col /></colgroup>
          <tbody>
            {details.map((d, i) => (
              <tr key={i}>{d ? <><td>{d[0]}</td><td className={d[2] ? "ro" : undefined}>{d[1]}</td></> : <td colSpan={2} />}</tr>
            ))}
          </tbody>
        </Details>
      </DetailsBox>
      <Thumb $top={22} $h={122} />
    </Scroller>
  </Left>
);

/* ---------- view toolbar ---------- */
const Right = styled.div`display: grid; grid-template-rows: 35px minmax(0, 1fr) 228px; min-width: 0; min-height: 0;`;
const Bar = styled.div`display: flex; align-items: center; padding: 0 0 ${(p) => p.$pb || 0}px 11px; font-size: 15px; overflow: hidden; height: ${(p) => p.$h}px;`;
const Grip = styled.span`
  width: 8px; height: 22px; margin-right: 8px; flex: none;
  background: radial-gradient(circle at 1px 1px, #aaa 1px, transparent 1px) 0 0 / 4px 4px;
`;
const Tool = styled.button`
  width: 27px; height: 27px; flex: none; display: flex; align-items: center; justify-content: center; gap: 6px;
  ${(p) => p.$w && css`width: ${p.$w}px;`}
  ${(p) => p.$on && css`box-shadow: inset 0 0 0 1px #4a96e0; background: #e6f0fa;`}
`;
const Sep = styled.span`width: 9px; height: 26px; flex: none; background: linear-gradient(#cbcdd2, #cbcdd2) center / 1px 100% no-repeat;`;
const ToolSet = styled.span`display: flex; gap: 1px;`;
const Menu = styled.button`display: flex; align-items: center; gap: 3px; padding: 0 5px; flex: none; & + & { margin-left: 3px; }`;
const BarText = styled.span`padding: 0 5px; flex: none;`;
const tools = (list) => list.map((n, i) => <Tool key={i} aria-label={n}><Icon n={n} /></Tool>);

const ViewToolbar = () => (
  <Bar $h={35} $pb={2}>
    <Grip />{tools(["zprev", "znext"])}<Sep />
    <Tool $on aria-label="着色"><Icon n="cubeDark" /></Tool>{tools(["cubeSoft", "cubeSwap"])}<Sep />
    {tools(["expandA", "expandB"])}<Sep />
    <Tool $on $w={41} aria-label="旋转"><Icon n="rotate" /><Caret /></Tool>
    {tools(["pan", "zud", "zin", "zfit", "zsel"])}<Sep />
    <BarText>选择</BarText>
    <Menu><Icon n="mode" />模式<Caret /></Menu>
    <ToolSet>{tools(["label", "b1", "b2", "b3", "b4", "b5", "b6", "b7", "xyz", "n100", "abc"])}</ToolSet><Sep />
    <Menu><Icon n="clip" />剪贴板<Caret /></Menu>
    <Menu>[ 空 ]</Menu><Sep />
    <Menu><Icon n="extend" />扩展<Caret /></Menu>
    <Menu><Icon n="map" />选择依据<Caret /></Menu>
    <Menu><Icon n="convert" />转换<Caret /></Menu>
    <Overflow $c="#222" />
  </Bar>
);

/* ---------- 3D viewport ---------- */
const View = styled.section`
  position: relative; overflow: hidden; padding: 19px 20px;
  background: linear-gradient(#6a8adb, #ffffff); color: #10121a; font-size: 13px;
`;
const Scene = styled.svg`position: absolute; left: 0; top: 0;`;
const Info = styled.div`position: relative; line-height: 20px; strong { display: block; }`;
const Legend = styled.div`position: relative; display: flex; gap: 11px; margin-top: 19px;`;
const Swatches = styled.div`
  width: 21px; height: 203px; margin-top: 11px; display: grid; border: 1px solid #111; border-width: 2px 1px;
  i { border-top: 1px solid #111; } i:first-child { border: 0; }
`;
const Swatch = styled.i`background: ${(p) => p.$c};`;
const Values = styled.div`
  display: flex; flex-direction: column; justify-content: space-between; height: 222px; line-height: 22px;
  strong { font-size: 14px; }
`;
const Watermark = styled.div`
  position: absolute; left: 394px; top: 296px; font: 43px/60px "Liberation Serif", "Noto Serif CJK SC", "Noto Sans CJK SC", serif; color: #e0101c; white-space: nowrap;
  -webkit-text-stroke: 1px #e0101c;
`;
const Pointer = styled.div`position: absolute; left: 477px; top: 344px;`;

const rnd = (() => { let s = 7; return () => ((s = (s * 16807) % 2147483647) / 2147483647) - 0.5; })();
const triMesh = (x0, y0, w, h, d) => {
  const cols = Math.ceil(w / d), rows = Math.ceil(h / d);
  const pt = [];
  for (let r = 0; r <= rows; r++) {
    pt.push([]);
    for (let c = 0; c <= cols; c++) pt[r].push([x0 + (c + (r % 2) / 2) * d + rnd() * d * 0.45, y0 + r * d + rnd() * d * 0.45]);
  }
  const f = (p) => `${p[0].toFixed(1)} ${p[1].toFixed(1)}`;
  let out = "";
  for (let r = 0; r < rows; r++) for (let c = 0; c < cols; c++) {
    out += `M${f(pt[r][c + 1])}L${f(pt[r][c])}L${f(pt[r + 1][c])}`;
    out += r % 2 ? `M${f(pt[r][c])}L${f(pt[r + 1][c + 1])}` : `M${f(pt[r][c + 1])}L${f(pt[r + 1][c])}`;
  }
  return out;
};
const radials = (cx, cy, r1, r2, n, skew = 0) => {
  let out = "";
  for (let i = 0; i < n; i++) {
    const a = (i / n) * Math.PI * 2, b = a + skew * (i % 2 ? 1 : -1);
    out += `M${(cx + r1 * Math.cos(a)).toFixed(1)} ${(cy + r1 * Math.sin(a)).toFixed(1)}L${(cx + r2 * Math.cos(b)).toFixed(1)} ${(cy + r2 * Math.sin(b)).toFixed(1)}`;
  }
  return out;
};
/* ruled grid between two parallel edges a-b and d-c */
const strip = (a, b, c, d, n, m) => {
  const l = (p, q, t) => `${(p[0] + (q[0] - p[0]) * t).toFixed(1)} ${(p[1] + (q[1] - p[1]) * t).toFixed(1)}`;
  let out = "";
  for (let i = 0; i <= n; i++) out += `M${l(a, b, i / n)}L${l(d, c, i / n)}`;
  for (let j = 0; j <= m; j++) {
    const p = [a[0] + ((d[0] - a[0]) * j) / m, a[1] + ((d[1] - a[1]) * j) / m];
    out += `M${p[0]} ${p[1]}L${l(b, c, j / m)}`;
  }
  return out;
};
const pod = "M1016 452 946 405Q932 396 914 396C885 396 861 420 861 452 861 475 868 485 879 494L962 546Z";
const podMesh = triMesh(850, 385, 180, 175, 13);
const pegMesh = triMesh(892, 445, 56, 56, 6);
const C = [1052, 538];

const Model = () => (
  <Scene width="1366" height="549" viewBox="362 213 1366 549" fontFamily="Open Sans, sans-serif">
    <defs>
      <linearGradient id="pod" gradientUnits="userSpaceOnUse" x1="832" y1="451" x2="963" y2="542">
        {[["#c80000", 0, 0.26], ["#b87400", 0.26, 0.42], ["#b4b400", 0.42, 0.6], ["#78b400", 0.6, 0.78], ["#00b414", 0.78, 1]].flatMap(([c, a, b]) => [
          <stop key={c + a} offset={a} stopColor={c} />, <stop key={c + b} offset={b} stopColor={c} />])}
      </linearGradient>
      <linearGradient id="rod" gradientUnits="userSpaceOnUse" x1="822" y1="579" x2="972" y2="490">
        {[["#a8782a", 0, 0.17], ["#b4a428", 0.17, 0.42], ["#7ea818", 0.42, 0.58], ["#1ea428", 0.58, 0.76], ["#3cb89c", 0.76, 1]].flatMap(([c, a, b]) => [
          <stop key={c + a} offset={a} stopColor={c} />, <stop key={c + b} offset={b} stopColor={c} />])}
      </linearGradient>
      <linearGradient id="tape" gradientUnits="userSpaceOnUse" x1="1240" y1="556" x2="1226" y2="577">
        <stop offset="0" stopColor="#0000c4" /><stop offset=".5" stopColor="#0000a4" /><stop offset="1" stopColor="#000044" />
      </linearGradient>
      <clipPath id="podClip"><path d={pod} /></clipPath>
      <clipPath id="pegClip"><circle cx="919" cy="474" r="24" /></clipPath>
    </defs>

    <path d={pod} fill="url(#pod)" />
    <g clipPath="url(#podClip)">
      <path d={podMesh} fill="none" stroke="#1c1c00" strokeWidth="1" />
    </g>
    <path d={pod} fill="none" stroke="#111" />
    <path d="M942 468Q954 480 950 492L922 508 906 494Q938 500 942 468Z" fill="#0c0c00" />
    <circle cx="919" cy="474" r="24" fill="#8a9a14" />
    <path d={pegMesh} clipPath="url(#pegClip)" fill="none" stroke="#1c1c00" strokeWidth=".9" />

    <path d="M818 569 976 474 990 500 828 587Z" fill="url(#rod)" stroke="#111" />
    <path d={strip([818, 569], [976, 474], [990, 500], [828, 587], 36, 4)} fill="none" stroke="#181800" strokeWidth=".7" />

    <path d="M1090 452 1368 641 1357 659 1130 505Z" fill="url(#tape)" />
    <path d={strip([1110, 466], [1368, 641], [1357, 659], [1099, 484], 58, 5)} fill="none" stroke="#000018" strokeWidth=".7" />

    <ellipse cx="1058" cy="546" rx="92" ry="94" fill="#07190f" />
    <ellipse cx="1056" cy="544" rx="92" ry="93" fill="none" stroke="#2aa67c" strokeWidth="3" strokeDasharray="5 1 2 1" strokeDashoffset="3" />
    <ellipse cx={C[0]} cy={C[1]} rx="92" ry="93" fill="#0000b8" stroke="#000" />
    <g fill="none" stroke="#000030" strokeWidth=".8">
      {[88, 82, 76, 70, 64, 56, 48, 42].map((r) => <circle key={r} cx={C[0]} cy={C[1]} r={r} />)}
      <path d={radials(C[0], C[1], 64, 92, 92)} />
      <path d={radials(C[0], C[1], 48, 64, 56, 0.07)} />
      <path d={radials(C[0], C[1], 38, 48, 36, 0.09)} />
    </g>
    <ellipse cx="1051" cy="537" rx="37" ry="38" fill="#000a50" stroke="#000" strokeWidth="2" />
    <ellipse cx="1053" cy="539" rx="35" ry="36" fill="none" stroke="#1b7fae" />
    <ellipse cx="1054" cy="541" rx="34" ry="34" fill="#147fb4" stroke="#001c40" />
    <path d={radials(1056, 544, 20, 33, 20, 0.14)} stroke="#00233c" fill="none" />
    <circle cx="1057" cy="545" r="20" fill="#eef2fb" stroke="#0a14b8" strokeWidth="4" />

    <g stroke="#111">
      <rect x="902" y="712" width="380" height="10" fill="#fff" />
      <path d="M902 712h95v10h-95ZM1092 712h95v10h-95Z" fill="#000" />
    </g>
    <g fontSize="13" fill="#111" textAnchor="middle">
      <text x="901" y="707">0.00</text><text x="1092" y="707">100.00</text><text x="1299" y="707">200.00 (mm)</text>
      <text x="996" y="738">50.00</text><text x="1187" y="738">150.00</text>
    </g>

    <path d="m1673 276 17-34h7l-16 34Z M1690 254l7-12 14 34h-12Z" fill="#fff" />
    <text x="1707" y="276" fontSize="44" fontWeight="700" fill="#fff">nsys</text>
    <circle cx="1720" cy="659" r="8" fill="#0a8a1e" stroke="#063" />
    <circle cx="1729" cy="664" r="6" fill="#14208c" />
  </Scene>
);

const legend = ["#ff0000", "#ffb000", "#ffff00", "#b4ff00", "#00ff00", "#00ffb4", "#00ffff", "#00b0ff", "#0000ff"];
const Viewport = () => (
  <View>
    <Model />
    <Info><strong>B: 瞬态结构</strong>总变形<br />类型: 总变形<br />单位: mm<br />时间: 1 s<br />2023/4/22 23:48</Info>
    <Legend>
      <Swatches>{legend.map((c) => <Swatch key={c} $c={c} />)}</Swatches>
      <Values>
        <strong>167.24 最大</strong>
        {["148.66", "130.08", "111.49", "92.912", "74.33", "55.747", "37.165", "18.582"].map((v) => <span key={v}>{v}</span>)}
        <strong>0 最小</strong>
      </Values>
    </Legend>
    <Watermark>小汪学知识</Watermark>
    <Pointer><Icon n="cursor" s={32} /></Pointer>
  </View>
);

/* ---------- bottom panels ---------- */
const Bottom = styled.div`display: grid; grid-template-columns: minmax(0, 728fr) minmax(0, 632fr); gap: 6px; min-height: 0;`;
const Panel = styled.section`display: grid; grid-template-rows: 28px ${(p) => (p.$bar ? "34px " : "")}minmax(0, 1fr); min-height: 0; padding-top: 4px; height: 232px; margin-top: -4px; background: #ededef; position: relative;`;
const Canvas = styled.div`background: #fff; overflow: hidden;`;
const MoreTool = styled(Tool)`margin-left: auto; width: 18px;`;
const ticks = [["0.", 97], ["0.125", 182], ["0.25", 255], ["0.375", 333], ["0.5", 403], ["0.625", 484], ["0.75", 557], ["0.875", 635], ["1.", 694]];
const Chart = () => (
  <svg width="100%" height="166" viewBox="0 0 728 166" fontFamily="Open Sans, sans-serif" fontSize="11" fill="#333">
    <path d="M88 30.500H699M88 66.500H98M97.500 30v44" stroke="#bbb" fill="none" />
    {ticks.map(([t, x], i) => (
      <g key={t}><path d={`M${97.5 + i * 75.2} 66v9`} stroke="#999" /><text x={x} y="90" textAnchor="middle">{t}</text></g>
    ))}
    <text x="83" y="35" textAnchor="end">167.24</text>
    <text x="83" y="71" textAnchor="end">0.</text>
    <text x="694" y="18" textAnchor="middle">1.</text>
    <path d="M120 66H699" stroke="#b00c0c" strokeWidth="3" />
    <path d="M119 65.500Q400 65 699 59" stroke="#0a0ab4" strokeWidth="3" fill="none" />
    <path d="M118 63v6M129 62v7" stroke="#0a0ab4" strokeWidth="3" />
    <path d="M126 64Q420 43 699 30" stroke="#128012" strokeWidth="3.500" fill="none" />
    <path d="M699 24v44" stroke="#000" strokeWidth="3" />
    <text transform="translate(6 44) rotate(-90)" x="0" y="37" textAnchor="middle" fontSize="17" fontWeight="700" fill="#111">[mm]</text>
    <text x="399" y="121" textAnchor="middle" fontSize="14" fontWeight="700" fill="#111">[s]</text>
    <path d="M97.500 132.500h602v18h-602Z" fill="#ededed" stroke="#999" />
    <text x="397" y="145" textAnchor="middle">1</text>
  </svg>
);

const Grid = styled.table`
  border-collapse: separate; border-spacing: 0; table-layout: fixed; width: 426px; font-size: 13px; line-height: 18px; color: #222;
  th, td { height: 22px; padding: 0 4px; text-align: left; font-weight: 400; white-space: nowrap; overflow: hidden; background: #e8e7e3; border: solid #c6c6c4; border-width: 0 2px 2px 0; }
  tbody tr:nth-child(odd) > * { height: 23px; }
  thead th { height: 23px; background: #f0f0f1; border-color: #9a9a9a; }
  tbody th { background: #f0f0f1; border-color: #8e8e8e; padding-left: 2px; }
`;
const GridArea = styled.div`background: #9f9f9f; overflow: hidden;`;
const HeadTick = styled.label`
  display: flex; align-items: center; gap: 6px; color: ${(p) => p.$c};
  input { appearance: none; width: 18px; height: 18px; background: #fff; border: solid #888; border-width: 2px 0 0 2px; display: grid; place-items: center; }
  input:checked::after { content: ""; width: 10px; height: 6px; border: solid #000; border-width: 0 0 3px 3px; rotate: -45deg; translate: 0 -1px; }
`;
const rows = [
  ["3.3333e-002", "6.1912", "1.0854"], ["5.e-002", "9.2857", "1.6281"], ["5.8333e-002", "10.832", "1.8987"], ["6.3333e-002", "11.76", "2.0624"],
  ["6.8333e-002", "12.686", "2.2236"], ["7.3333e-002", "13.616", "2.3879"], ["7.8333e-002", "14.541", "2.5486"], ["8.3333e-002", "15.47", "2.7129"],
];

const BottomPanels = () => (
  <Bottom>
    <Panel $bar>
      <DockHeader title="图形" pl={5} />
      <Bar $h={34}>
        <Grip /><BarText>动画</BarText>
        {tools(["first", "play"])}<Tool $on aria-label="停止"><Icon n="stop" /></Tool>{tools(["next"])}<Sep />
        <Tool $on aria-label="分布"><Icon n="barsG" /></Tool>{tools(["barsB"])}<Sep />
        <Combo w={124} label="帧">20 帧</Combo><Combo w={124} label="时长">2 Sec (自动)</Combo><Sep />
        {tools(["export"])}<Sep />{tools(["zplay", "stripes", "hand"])}<Sep />{tools(["film", "film"])}
        <MoreTool aria-label="更多"><Icon n="more" /></MoreTool>
      </Bar>
      <Canvas><Chart /></Canvas>
    </Panel>
    <Panel>
      <DockHeader title="表格数据" pl={5} buttons={false} />
      <GridArea>
        <Grid>
          <colgroup><col width="33" /><col width="89" /><col width="101" /><col width="102" /><col width="101" /></colgroup>
          <thead>
            <tr>
              <th /><th>时间 [s]</th>
              {[["最小", "#c02020"], ["最大", "#1f9a2a"], ["平均", "#1a1ac0"]].map(([t, c]) => (
                <th key={t}><HeadTick $c={c}><input type="checkbox" defaultChecked />{t} [mm]</HeadTick></th>
              ))}
            </tr>
          </thead>
          <tbody>{rows.map(([t, a, b], i) => <tr key={t}><th>{i + 1}</th><td>{t}</td><td>0.</td><td>{a}</td><td>{b}</td></tr>)}</tbody>
        </Grid>
      </GridArea>
    </Panel>
  </Bottom>
);

/* ---------- status bar, taskbar ---------- */
const Status = styled.footer`
  position: relative; display: flex; align-items: center; justify-content: flex-end; background: #0078c8; color: #eef6fd; font-size: 15px; white-space: nowrap;
`;
const StatusItems = styled.div`
  width: 525px; display: flex; align-items: center; gap: 22px; overflow: hidden;
  span { display: flex; align-items: center; gap: 4px; }
`;
const MetricUp = styled.i`border: 6px solid transparent; border-top: 0; border-bottom: 7px solid #fff; margin: 0 3px 0 5px;`;
const Ime = styled.div`
  position: absolute; right: 0; bottom: 4px; width: 91px; height: 31px; background: #fff; color: #1676d8;
  display: flex; align-items: center; gap: 13px; padding-left: 10px; font-size: 20px; font-weight: 700;
`;
const ImeLogo = styled.span`position: absolute; left: -37px; top: -7px;`;
const Taskbar = styled.nav`
  display: flex; align-items: center; overflow: hidden;
  background: linear-gradient(90deg, #c6f2e7, #c0ecdc 12%, #c8e8e0 18%, #c9f0dc 26%, #d2f6e0 32%, #d5eede 37%, #dce3d9 41%, #d0e8e4 45%, #cfe9e6 60%, #c8f0da 71%, #cbe6e6 82%, #dadfd6 88%, #efdccb 95%, #e3d8d0);
`;
const Search = styled.label`
  width: 250px; height: 38px; margin-right: 5px; display: flex; align-items: center; flex: none;
  background: #effcf7; border: 1px solid #c7ddd6; border-left: 0; border-radius: 0 19px 19px 0; padding-right: 3px;
  & > svg:first-child { margin-left: -8px; }
  input { width: 120px; margin: 0 auto 0 11px; font-size: 18px; }
  input::placeholder { color: #555; opacity: 1; }
`;
const AppButton = styled.button`
  width: 50px; height: 50px; margin-right: 5px; flex: none; display: grid; grid-template-rows: 42px 4px; justify-items: center; align-items: center; border-radius: 4px;
  padding-top: 3px;
  background: ${(p) => (p.$on ? "rgba(255,255,255,.6)" : "none")};
  &::after { content: ""; height: 4px; border-radius: 2px; width: ${(p) => (p.$on ? 20 : p.$run ? 8 : 0)}px; background: ${(p) => (p.$on ? "#0f6cbd" : "#7d8a86")}; }
`;
const Tray = styled.div`margin-left: auto; display: flex; align-items: center; flex: none;`;
const TrayBtn = styled.button`width: ${(p) => p.$w || 40}px; height: 40px; display: grid; place-items: center;`;
const Clock = styled.time`width: 45px; padding: 18px 0 0 16px; overflow: hidden; font-size: 14px; color: #222; flex: none;`;

const Earth = () => (
  <svg width="62" height="32" viewBox="0 0 62 32">
    <circle cx="31" cy="16" r="14" fill="#4f86d8" />
    <path d="M20 8q6-7 13-5l4 4-3 4-4-1-3 5 6 1 2 4-5 8-4-7-6-3Zm18-4q8 5 6 15l-5 1-4-6 4-4Z" fill="#4c9a3c" />
    <g fill="#f7b32b"><circle cx="7" cy="6" r="3" /><circle cx="11" cy="10" r="3" /><circle cx="7" cy="14" r="3" /><circle cx="3" cy="10" r="3" /><circle cx="14" cy="3" r="1.800" /><circle cx="55" cy="5" r="2.500" /><circle cx="58" cy="8" r="2.500" /><circle cx="55" cy="11" r="2.500" /><circle cx="52" cy="8" r="2.500" /></g>
    <circle cx="7" cy="10" r="2" fill="#e2761b" /><circle cx="55" cy="8" r="1.500" fill="#e2761b" />
    <path d="M4 19q10 0 11 10Q4 29 4 19ZM44 1q7 4 3 11-7-4-3-11ZM46 30q0-14 14-15 1 13-12 13Z" fill="#7fb52e" />
  </svg>
);

const StatusBar = () => (
  <Status>
    <StatusItems>
      <span><Icon n="warn" s={19} />7 消息</span><span>无选择</span>
      <span><MetricUp />度量标准（mm、kg、N、s、mV</span>
    </StatusItems>
    <Ime>
      <ImeLogo><Icon n="sogou" s={42} /></ImeLogo>中<span>°,</span><Icon n="micFill" s={20} />
    </Ime>
  </Status>
);
const apps = [["view", 0], ["explorer", 1], ["baidu", 0], ["hao", 0], ["edgeB", 1], ["sw", 1], ["perf", 1], ["wb", 1], ["mech", 2]];
const TaskBar = () => (
  <Taskbar>
    <Search><Icon n="mag" s={19} /><input placeholder="搜索" aria-label="搜索" /><Earth /></Search>
    {apps.map(([n, st]) => <AppButton key={n} aria-label={n} $run={st === 1} $on={st === 2}><Icon n={n} s={30} /></AppButton>)}
    <Tray>
      {["caretUp", "guard", "sync", "mic", "zhong"].map((n) => <TrayBtn key={n} aria-label={n}><Icon n={n} s={20} /></TrayBtn>)}
      <TrayBtn $w={58} aria-label="输入法"><Icon n="sogou" s={22} /></TrayBtn>
      {["wifi", "sound", "battery"].map((n) => <TrayBtn key={n} $w={30} aria-label={n}><Icon n={n} s={20} /></TrayBtn>)}
      <Clock>2023</Clock>
    </Tray>
  </Taskbar>
);

export default function App() {
  return (
    <Shell>
      <Global />
      <Head>
        <TitleRow>
          <EnvTab>环境</EnvTab>
          <Title>B : 瞬态结构 - Mechanical [ANSYS Mechanical Enterprise PrepPost]</Title>
          <Minimize aria-label="最小化" />
        </TitleRow>
        <TabRow>
          <Tab>主页</Tab><Tab $on>结果</Tab><Tab>显示</Tab><Tab>选择</Tab><Tab>自动化</Tab>
          <QuickStart placeholder="快速启动" aria-label="快速启动" />
        </TabRow>
      </Head>
      <RibbonBar />
      <Body>
        <LeftPanel />
        <Right><ViewToolbar /><Viewport /><BottomPanels /></Right>
      </Body>
      <StatusBar />
      <TaskBar />
    </Shell>
  );
}
